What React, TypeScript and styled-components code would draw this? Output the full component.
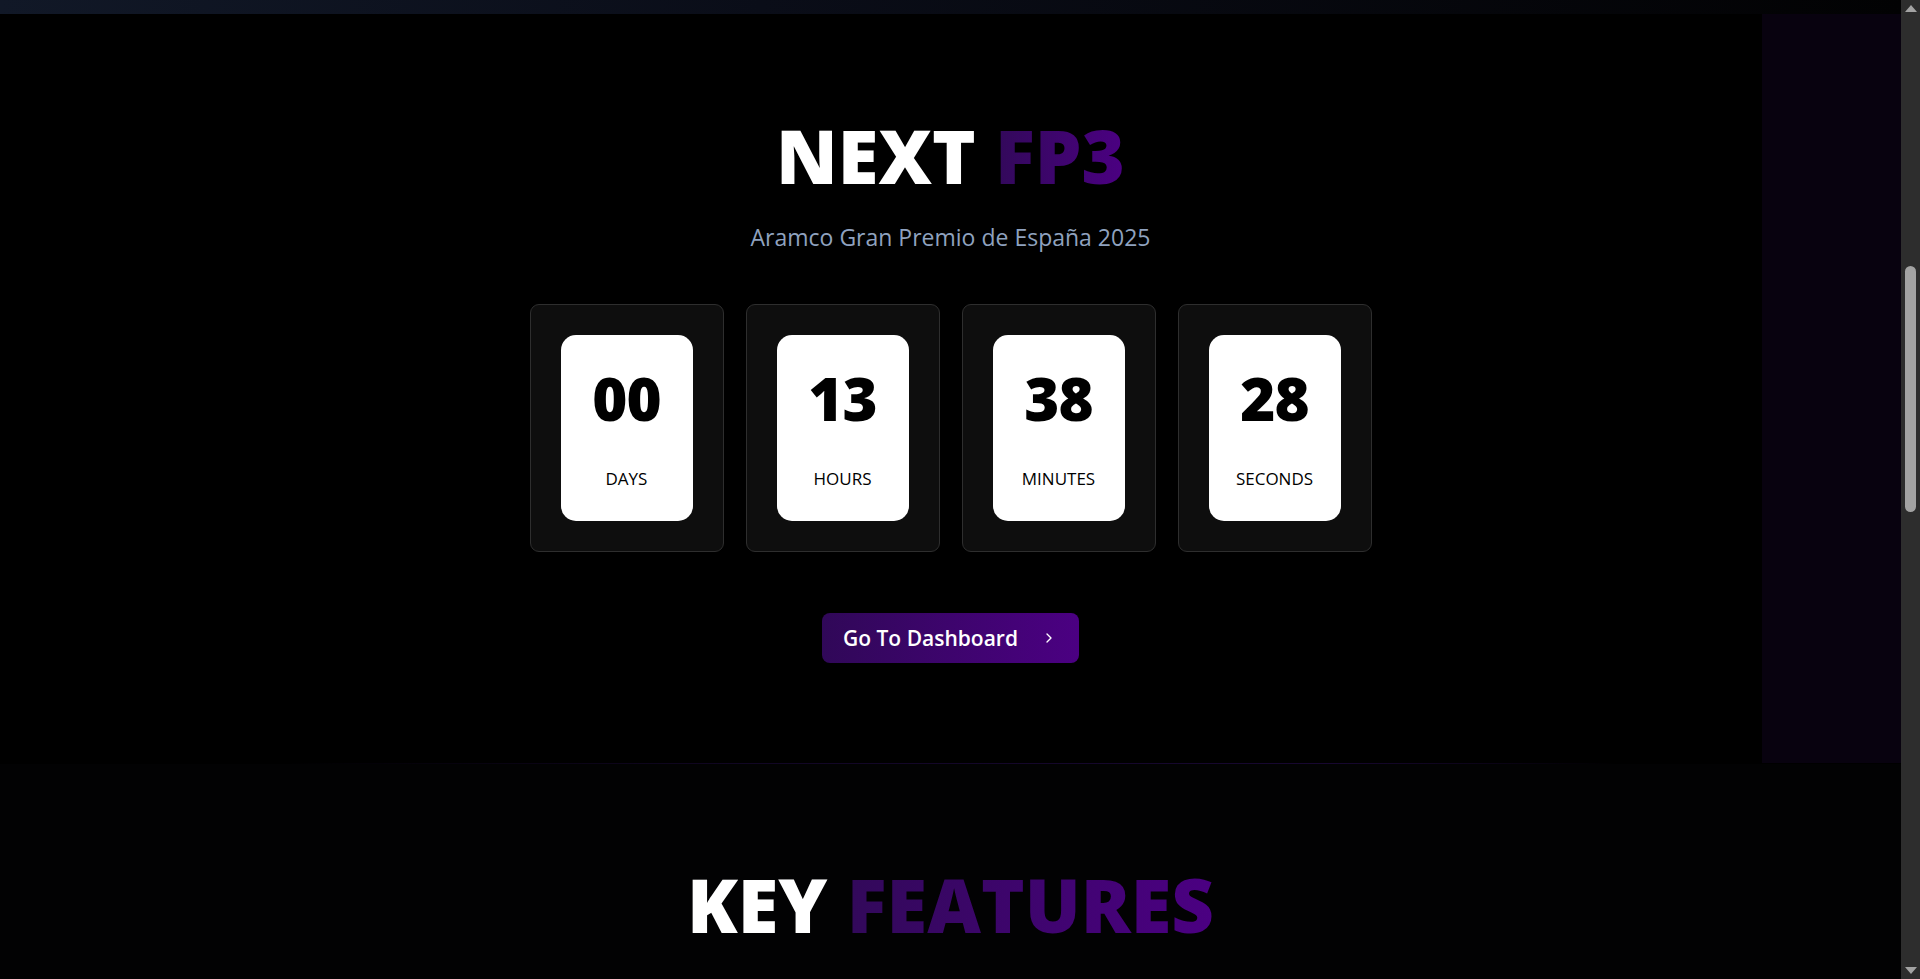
import React from 'react';
import styled, { createGlobalStyle } from 'styled-components';
import { ChevronRight } from 'lucide-react';

const GlobalStyle = createGlobalStyle`
  html, body {
    margin: 0;
    height: 979px;
    overflow: hidden;
    background: #000;
  }
  body {
    font-family: 'Open Sans', 'Noto Sans', sans-serif;
    color: #fff;
  }
`;

const Window = styled.div`
  height: 979px;
  display: flex;
  background: #000;
`;

const Viewport = styled.main`
  flex: 1;
  min-width: 0;
  display: flex;
  flex-direction: column;
  overflow: hidden;
`;

// bottom edge of the hero above, scrolled nearly out of view
const HeroTail = styled.div`
  flex: 0 0 14px;
  background: linear-gradient(to right, #111827 0%, #0a0d18 40%, #020203 100%);
`;

const CountdownSection = styled.section`
  position: relative;
  flex: 0 0 749px;
  box-sizing: border-box;
  padding-top: 105px;
  background: #000;
  display: flex;
  flex-direction: column;
  align-items: center;
`;

const SideGlow = styled.div`
  position: absolute;
  top: 0;
  right: 0;
  bottom: 0;
  width: 139px;
  background: #08020f;
`;

const Heading = styled.h2`
  margin: 0;
  font-family: 'Open Sans', sans-serif;
  font-size: 74px;
  line-height: 1;
  font-weight: 800;
  color: #fff;
  text-align: center;
`;

const Accent = styled.span`
  background: linear-gradient(to right, #32095a, #4b0082);
  -webkit-background-clip: text;
  background-clip: text;
  color: transparent;
`;

const Subtitle = styled.p`
  margin: 28px 0 0;
  font-size: 23px;
  line-height: 32px;
  color: #8fa2bf;
`;

const TimerRow = styled.div`
  display: flex;
  gap: 22px;
  margin-top: 51px;
`;

const TimerCard = styled.div`
  width: 194px;
  height: 248px;
  box-sizing: border-box;
  padding: 30px;
  background: #0e0e0e;
  border: 1px solid #2e2e2e;
  border-radius: 9px;
`;

const TimerFace = styled.div`
  height: 186px;
  box-sizing: border-box;
  padding-top: 33px;
  background: #fff;
  border-radius: 15px;
  display: flex;
  flex-direction: column;
  align-items: center;
  color: #000;
`;

const TimerValue = styled.div`
  font-size: 60px;
  line-height: 60px;
  font-weight: 800;
  letter-spacing: -1px;
`;

const TimerLabel = styled.div`
  margin-top: 37px;
  font-size: 17px;
  line-height: 27px;
  font-weight: 500;
  text-transform: uppercase;
`;

const DashboardButton = styled.button`
  margin-top: 61px;
  height: 50px;
  display: flex;
  align-items: center;
  gap: 23px;
  padding: 0 22px 0 21px;
  border: none;
  border-radius: 8px;
  background: linear-gradient(to right, #300858, #4b0082);
  color: #fff;
  font-family: 'Open Sans', sans-serif;
  font-size: 21px;
  font-weight: 600;
  cursor: pointer;
`;

const Divider = styled.div`
  flex: 0 0 1px;
  background: linear-gradient(to right, transparent 15%, #110624 40%, #170730 70%, transparent 85%);
`;

const FeaturesSection = styled.section`
  flex: 0 0 600px;
  box-sizing: border-box;
  padding-top: 104px;
  background: #020203;
`;

const Scrollbar = styled.div`
  flex: 0 0 19px;
  display: flex;
  flex-direction: column;
  align-items: center;
  background: #2d2d2d;
`;

const ArrowButton = styled.div<{ $dir: 'up' | 'down' }>`
  flex: 0 0 17px;
  display: flex;
  align-items: center;
  justify-content: center;

  &::before {
    content: '';
    width: 0;
    height: 0;
    border-left: 6px solid transparent;
    border-right: 6px solid transparent;
    ${({ $dir }) => ($dir === 'up' ? 'border-bottom: 7px solid #a3a3a3;' : 'border-top: 7px solid #a3a3a3;')}
  }
`;

const Track = styled.div`
  flex: 1;
  width: 100%;
  display: flex;
  justify-content: center;
`;

const Thumb = styled.div`
  width: 11px;
  height: 246px;
  margin-top: 249px;
  border-radius: 6px;
  background: #a3a3a3;
`;

const timer = [
  { value: '00', label: 'Days' },
  { value: '13', label: 'Hours' },
  { value: '38', label: 'Minutes' },
  { value: '28', label: 'Seconds' },
];

export default function App() {
  return (
    <>
      <GlobalStyle />
      <Window>
        <Viewport>
          <HeroTail />
          <CountdownSection>
            <SideGlow />
            <Heading>
              NEXT <Accent>FP3</Accent>
            </Heading>
            <Subtitle>Aramco Gran Premio de España 2025</Subtitle>
            <TimerRow>
              {timer.map((t) => (
                <TimerCard key={t.label}>
                  <TimerFace>
                    <TimerValue>{t.value}</TimerValue>
                    <TimerLabel>{t.label}</TimerLabel>
                  </TimerFace>
                </TimerCard>
              ))}
            </TimerRow>
            <DashboardButton>
              Go To Dashboard
              <ChevronRight size={16} strokeWidth={2} />
            </DashboardButton>
          </CountdownSection>
          <Divider />
          <FeaturesSection>
            <Heading>
              KEY <Accent>FEATURES</Accent>
            </Heading>
          </FeaturesSection>
        </Viewport>
        <Scrollbar>
          <ArrowButton $dir="up" />
          <Track>
            <Thumb />
          </Track>
          <ArrowButton $dir="down" />
        </Scrollbar>
      </Window>
    </>
  );
}
